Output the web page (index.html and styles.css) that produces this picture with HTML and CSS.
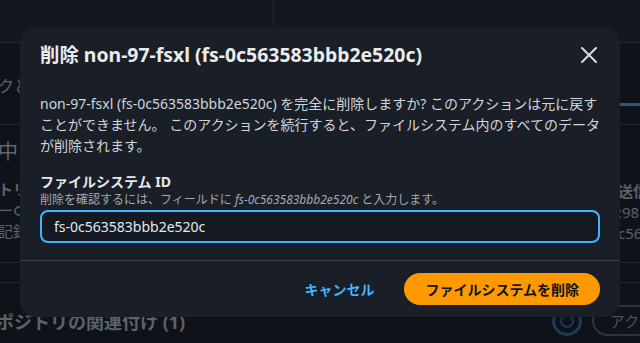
FILE: index.html
```html
<!DOCTYPE html>
<html lang="ja">
<head>
    <meta charset="UTF-8">
    <meta name="viewport" content="width=device-width, initial-scale=1.0">
    <title>ファイルシステムを削除</title>
    <link rel="stylesheet" href="styles.css">
</head>
<body>
    <div class="page">
        <div class="bg-row bg-top"><div class="bg-col"></div></div>
        <div class="bg-row bg-tabs">
            <span class="bg-left">クと</span>
            <span class="bg-tab">リ</span>
        </div>
        <div class="bg-row bg-details">
            <div class="bg-left bg-stack">
                <span class="bg-big">中</span>
                <span class="bg-bold">トリ</span>
                <span>ー<i class="bg-dot"></i></span>
                <span>記録</span>
            </div>
            <div class="bg-right bg-stack">
                <span class="bg-bold">送信</span>
                <span>:98</span>
                <span>c56</span>
            </div>
        </div>
        <div class="bg-row bg-thin"></div>
        <div class="bg-row bg-bottom">
            <span class="bg-left bg-heading">ポジトリの関連付け (1)</span>
            <div class="bg-actions">
                <span class="bg-ring"></span>
                <span class="bg-btn">アクション</span>
            </div>
        </div>
    </div>

    <div class="overlay">
        <div class="modal" role="dialog">
            <div class="modal-header">
                <h2 class="modal-title">削除 non-97-fsxl (fs-0c563583bbb2e520c)</h2>
                <button class="close-btn" aria-label="閉じる">
                    <svg width="16" height="16" viewBox="0 0 16 16">
                        <path d="M1 1 L15 15 M15 1 L1 15" stroke="#d5dbe1" stroke-width="2" stroke-linecap="round" fill="none"/>
                    </svg>
                </button>
            </div>
            <div class="modal-body">
                <p class="message">non-97-fsxl (fs-0c563583bbb2e520c) を完全に削除しますか? このアクションは元に戻すことができません。 このアクションを続行すると、ファイルシステム内のすべてのデータが削除されます。</p>
                <div class="field">
                    <label class="field-label" for="confirm">ファイルシステム ID</label>
                    <div class="field-desc">削除を確認するには、フィールドに <em>fs-0c563583bbb2e520c</em> と入力します。</div>
                    <input id="confirm" class="field-input" type="text" value="fs-0c563583bbb2e520c">
                </div>
            </div>
            <div class="modal-footer">
                <button class="btn-link">キャンセル</button>
                <button class="btn-primary">ファイルシステムを削除</button>
            </div>
        </div>
    </div>
</body>
</html>
```

FILE: styles.css
```css
* { box-sizing: border-box; }
body { margin: 0; font-family: "Noto Sans", "Noto Sans CJK JP", sans-serif; background: #0f1319; overflow: hidden; }

/* dimmed page behind the dialog */
.page { height: 343px; color: #5c6269; font-size: 15px; overflow: hidden; }
.bg-row { display: flex; justify-content: space-between; border-bottom: 1px solid #232830; }
.bg-top { height: 43px; background: #131820; }
.bg-col { width: 274px; height: 27px; border-right: 1px solid #232830; }
.bg-tabs { height: 82px; align-items: flex-start; }
.bg-tabs .bg-left { margin: 30px 0 0 -2px; font-size: 16px; }
.bg-tab { margin: 26px 0 0 0; width: 40px; padding: 0 0 10px 0; border-bottom: 3px solid #2c5878; color: #3b6f93; font-size: 16px; }
.bg-details { height: 138px; }
.bg-stack { display: flex; flex-direction: column; line-height: 21px; white-space: nowrap; }
.bg-details .bg-left { padding: 14px 0 0 0; margin-left: -2px; }
.bg-details .bg-right { padding: 56px 0 0 0; margin-right: -14px; width: 36px; }
.bg-big { font-size: 20px; line-height: 26px; margin-bottom: 14px; color: #5f656c; }
.bg-bold { font-weight: bold; }
.bg-dot { display: inline-block; width: 10px; height: 10px; border: 2px solid #2e6a3a; border-radius: 50%; margin-left: 1px; }
.bg-thin { height: 20px; }
.bg-bottom { border-bottom: 0; align-items: center; padding-top: 22px; }
.bg-heading { font-size: 18px; font-weight: bold; margin-left: -4px; }
.bg-actions { display: flex; align-items: center; gap: 10px; margin-right: -62px; }
.bg-ring { width: 30px; height: 30px; border: 3px solid #1d3b52; border-radius: 50%; box-shadow: inset 0 0 0 5px #0f1319, inset 0 0 0 7px #1d3b52; }
.bg-btn { border: 2px solid #2d333b; border-radius: 16px; padding: 3px 16px; color: #4b5159; font-size: 15px; white-space: nowrap; }

/* dialog */
.overlay { position: fixed; inset: 0; }
.modal { position: absolute; left: 20px; top: 27px; width: 600px; background: #191e27; border-radius: 16px; color: #d1d5da; }
.modal-header { display: flex; align-items: center; justify-content: space-between; padding: 15px 20px 12px 20px; }
.modal-title { margin: 0; font-size: 19.4px; line-height: 26px; font-weight: bold; color: #e9ebed; }
.close-btn { background: none; border: 0; padding: 0; margin-right: 3px; width: 16px; height: 16px; display: flex; }
.modal-body { padding: 13px 20px 17px 20px; }
.message { margin: 0 0 16px 0; font-size: 14px; line-height: 21px; }
.field { display: flex; flex-direction: column; }
.field-label { font-size: 14px; line-height: 20px; font-weight: bold; color: #e6e8eb; }
.field-desc { font-size: 12px; line-height: 16px; color: #a4aab2; }
.field-desc em { font-style: italic; }
.field-input { margin-top: 2px; height: 33px; border: 2px solid #42b4ff; border-radius: 8px; background: #151a22; color: #e5e7eb; font-family: inherit; font-size: 14px; padding: 0 12px; outline: none; }
.modal-footer { display: flex; justify-content: flex-end; align-items: center; gap: 10px; padding: 12px 20px; border-top: 1px solid #3b414a; }
.btn-link { background: none; border: 0; padding: 0 20px; font-family: inherit; font-size: 14px; font-weight: bold; color: #42b4ff; height: 32px; }
.btn-primary { background: #ff9900; border: 0; border-radius: 16px; height: 32px; padding: 0 21px; font-family: inherit; font-size: 14px; font-weight: bold; color: #0f141a; }
```
